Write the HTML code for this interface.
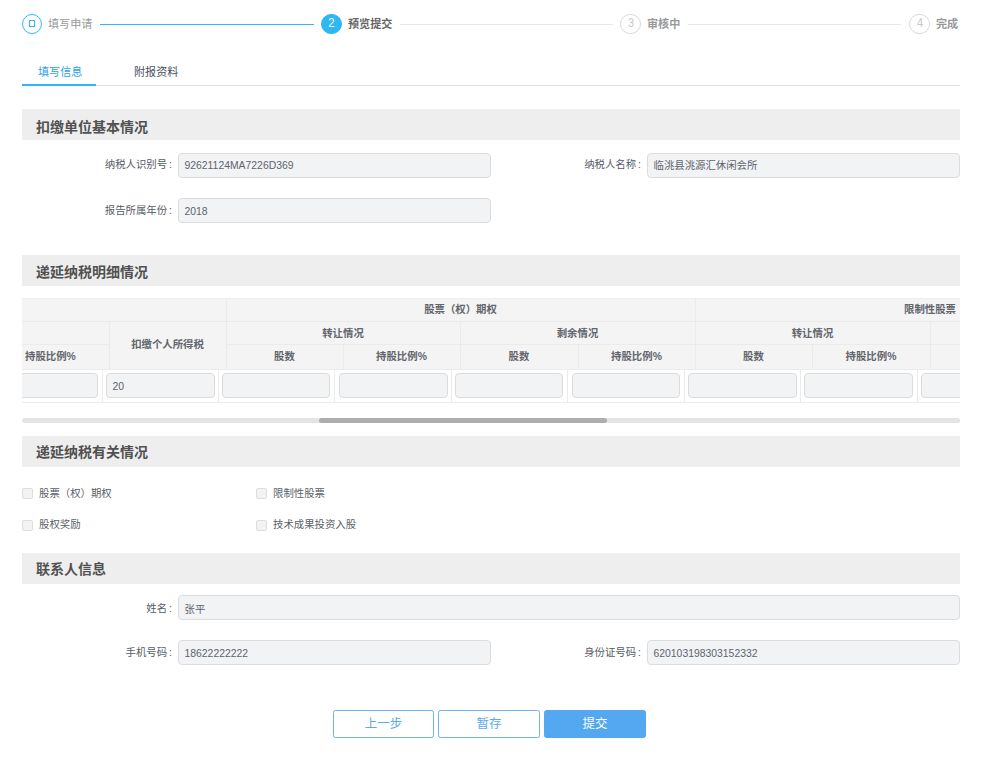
<!DOCTYPE html>
<html lang="zh-CN">
<head>
<meta charset="utf-8">
<title>递延纳税备案 - 预览提交</title>
<style>
*{box-sizing:border-box;margin:0;padding:0}
html,body{width:1000px;height:761px;background:#fff;overflow:hidden}
body{position:relative;font-family:"Liberation Sans","Noto Sans CJK SC",sans-serif;font-size:12px;color:#495060;line-height:1}
.abs{position:absolute}
/* steps */
.step-circle{position:absolute;top:13.5px;width:20.5px;height:20.5px;border-radius:50%;border:1px solid #d9d9d9;background:#fff;color:#c8c8c8;font-size:13px;line-height:16.5px;text-align:center}
.step-circle.done{border-color:#2db7f5}
.step-circle.cur{background:#2db7f5;border-color:#2db7f5;color:#fff;font-size:13.5px;line-height:16px}
.step-circle span{display:inline-block;transform:translateX(.3px) scaleX(.84)}
.step-circle.cur span{transform:translateX(.6px) scaleX(.84)}
.step-title{position:absolute;top:17px;height:14px;line-height:14px;font-size:11.1px;color:#999;white-space:nowrap}
.step-title.b{font-weight:bold}
.step-title.cur{color:#666;font-weight:bold}
.step-line{position:absolute;top:24px;height:1px;background:#e8e8e8}
.step-line.done{background:#2db7f5}
/* tabs */
.tab{position:absolute;top:64px;height:16px;line-height:16px;font-size:11.1px;color:#495060;white-space:nowrap}
.tab.act{color:#2d9fe8}
/* section */
.sec{position:absolute;left:22px;width:938px;height:31px;background:#eee;padding-left:14px;font-size:14px;font-weight:bold;color:#515151;line-height:34px;white-space:nowrap}
.lbl{position:absolute;height:24px;line-height:24px;text-align:right;font-size:10.4px;padding-right:4px;color:#565b66;white-space:nowrap}
.inp{position:absolute;height:25px;border:1px solid #dcdcdc;border-radius:4px;background:#f2f3f5;padding:0 5.5px;line-height:23px;font-size:10.4px;color:#5e636e;white-space:nowrap;overflow:hidden}
.lbl i{font-style:normal;margin-left:2px}
/* table */
.th{position:absolute;font-weight:bold;font-size:10.4px;color:#62656c;text-align:center;white-space:nowrap;height:14px;line-height:14px}
.vl{position:absolute;width:1px;background:#ebebeb}
.hl{position:absolute;height:1px;background:#ebebeb}
/* checkbox */
.cb{position:absolute;width:11px;height:11px;border:1px solid #dedede;border-radius:2px;background:#f3f3f3}
.cbl{position:absolute;height:14px;line-height:14px;font-size:10.4px;color:#5a5f69;white-space:nowrap}
/* buttons */
.btn{position:absolute;top:710px;height:28px;border:1px solid #6cb2f4;border-radius:2.5px;color:#5aa9f2;background:#fff;font-size:12.5px;text-align:center;line-height:26px;white-space:nowrap}
.btn.pri{background:#54a8f1;border-color:#54a8f1;color:#fff}
</style>
</head>
<body>

<!-- steps -->
<div class="step-circle done" style="left:21.5px"></div><div class="abs" style="left:29px;top:20px;width:6px;height:7px;border:1px solid #2db7f5"></div>
<div class="step-title" style="left:48px">填写申请</div>
<div class="step-line done" style="left:100px;width:213.5px"></div>

<div class="step-circle cur" style="left:321px"><span>2</span></div>
<div class="step-title cur" style="left:348px">预览提交</div>
<div class="step-line" style="left:400px;width:212.5px"></div>

<div class="step-circle" style="left:620px"><span>3</span></div>
<div class="step-title b" style="left:647px">审核中</div>
<div class="step-line" style="left:688px;width:213px"></div>

<div class="step-circle" style="left:909px"><span>4</span></div>
<div class="step-title b" style="left:936px">完成</div>

<!-- tabs -->
<div class="abs" style="left:22px;top:85px;width:938px;height:1px;background:#dddee1"></div>
<div class="abs" style="left:22px;top:84px;width:74px;height:2px;background:#2db7f5"></div>
<div class="tab act" style="left:38px">填写信息</div>
<div class="tab" style="left:134px">附报资料</div>

<!-- section 1 -->
<div class="sec" style="top:109px;line-height:36px">扣缴单位基本情况</div>
<div class="lbl" style="left:60px;width:116px;top:153px">纳税人识别号<i>:</i></div>
<div class="inp" style="left:178px;top:153px;width:313px">92621124MA7226D369</div>
<div class="lbl" style="left:530px;width:115px;top:153px">纳税人名称<i>:</i></div>
<div class="inp" style="left:647px;top:153px;width:313px">临洮县洮源汇休闲会所</div>
<div class="lbl" style="left:60px;width:116px;top:199px">报告所属年份<i>:</i></div>
<div class="inp" style="left:178px;top:198px;width:313px;padding-top:1px">2018</div>

<!-- section 2 -->
<div class="sec" style="top:255px">递延纳税明细情况</div>

<!-- table -->
<div class="abs" id="tbl" style="left:22px;top:297px;width:938px;height:106px;overflow:hidden">
  <div class="abs" style="left:0;top:1px;width:938px;height:72px;background:#f4f4f4"></div>
  <!-- header lines -->
  <div class="hl" style="left:0;top:1px;width:938px;background:#f0f0f0"></div>
  <div class="hl" style="left:0;top:24px;width:938px"></div>
  <div class="hl" style="left:0;top:47px;width:87px"></div>
  <div class="hl" style="left:204px;top:47px;width:734px"></div>
  <div class="hl" style="left:0;top:72px;width:938px"></div>
  <div class="vl" style="left:87px;top:24px;height:48px"></div>
  <div class="vl" style="left:204px;top:1px;height:71px"></div>
  <div class="vl" style="left:321px;top:47px;height:25px"></div>
  <div class="vl" style="left:438px;top:24px;height:48px"></div>
  <div class="vl" style="left:556px;top:47px;height:25px"></div>
  <div class="vl" style="left:673px;top:1px;height:71px"></div>
  <div class="vl" style="left:790px;top:47px;height:25px"></div>
  <div class="vl" style="left:908px;top:24px;height:48px"></div>
  <!-- header text -->
  <div class="th" style="left:3px;top:53px;text-align:left">持股比例<b>%</b></div>
  <div class="th" style="left:87px;width:117px;top:41px">扣缴个人所得税</div>
  <div class="th" style="left:204px;width:469px;top:6px">股票（权）期权</div>
  <div class="th" style="left:204px;width:234px;top:30px">转让情况</div>
  <div class="th" style="left:438px;width:235px;top:30px">剩余情况</div>
  <div class="th" style="left:204px;width:117px;top:53px">股数</div>
  <div class="th" style="left:321px;width:117px;top:53px">持股比例<b>%</b></div>
  <div class="th" style="left:438px;width:118px;top:53px">股数</div>
  <div class="th" style="left:556px;width:117px;top:53px">持股比例<b>%</b></div>
  <div class="th" style="left:882px;top:6px;text-align:left">限制性股票</div>
  <div class="th" style="left:673px;width:235px;top:30px">转让情况</div>
  <div class="th" style="left:673px;width:117px;top:53px">股数</div>
  <div class="th" style="left:790px;width:118px;top:53px">持股比例<b>%</b></div>
  <!-- body -->
  <div class="hl" style="left:0;top:105px;width:938px"></div>
  <div class="vl" style="left:80px;top:73px;height:32px"></div>
  <div class="vl" style="left:196px;top:73px;height:32px"></div>
  <div class="vl" style="left:312px;top:73px;height:32px"></div>
  <div class="vl" style="left:429px;top:73px;height:32px"></div>
  <div class="vl" style="left:545px;top:73px;height:32px"></div>
  <div class="vl" style="left:662px;top:73px;height:32px"></div>
  <div class="vl" style="left:778px;top:73px;height:32px"></div>
  <div class="vl" style="left:895px;top:73px;height:32px"></div>
  <div class="inp" style="left:-30px;top:76px;width:106px"></div>
  <div class="inp" style="left:84px;top:76px;width:109px;padding-top:1px">20</div>
  <div class="inp" style="left:200px;top:76px;width:108px"></div>
  <div class="inp" style="left:317px;top:76px;width:109px"></div>
  <div class="inp" style="left:433px;top:76px;width:108px"></div>
  <div class="inp" style="left:550px;top:76px;width:108px"></div>
  <div class="inp" style="left:666px;top:76px;width:109px"></div>
  <div class="inp" style="left:782px;top:76px;width:109px"></div>
  <div class="inp" style="left:899px;top:76px;width:108px"></div>
</div>
<!-- scrollbar -->
<div class="abs" style="left:22px;top:418px;width:938px;height:5px;border-radius:3px;background:#e4e4e4"></div>
<div class="abs" style="left:319px;top:418px;width:288px;height:5px;border-radius:3px;background:#adadad"></div>

<!-- section 3 -->
<div class="sec" style="top:436px;line-height:32px">递延纳税有关情况</div>
<div class="cb" style="left:22px;top:488px"></div><div class="cbl" style="left:39px;top:487px">股票（权）期权</div>
<div class="cb" style="left:256px;top:488px"></div><div class="cbl" style="left:273px;top:487px">限制性股票</div>
<div class="cb" style="left:22px;top:519.5px"></div><div class="cbl" style="left:39px;top:518px">股权奖励</div>
<div class="cb" style="left:256px;top:519.5px"></div><div class="cbl" style="left:273px;top:518px">技术成果投资入股</div>

<!-- section 4 -->
<div class="sec" style="top:553px;line-height:33px">联系人信息</div>
<div class="lbl" style="left:60px;width:116px;top:597px">姓名<i>:</i></div>
<div class="inp" style="left:178px;top:595px;width:782px;padding-top:2px">张平</div>
<div class="lbl" style="left:60px;width:116px;top:641px">手机号码<i>:</i></div>
<div class="inp" style="left:178px;top:640px;width:313px;padding-top:1px">18622222222</div>
<div class="lbl" style="left:530px;width:115px;top:641px">身份证号码<i>:</i></div>
<div class="inp" style="left:647px;top:640px;width:313px;padding-top:1px">620103198303152332</div>

<!-- buttons -->
<div class="btn" style="left:333px;width:101px">上一步</div>
<div class="btn" style="left:438px;width:102px">暂存</div>
<div class="btn pri" style="left:544px;width:102px">提交</div>

</body>
</html>
